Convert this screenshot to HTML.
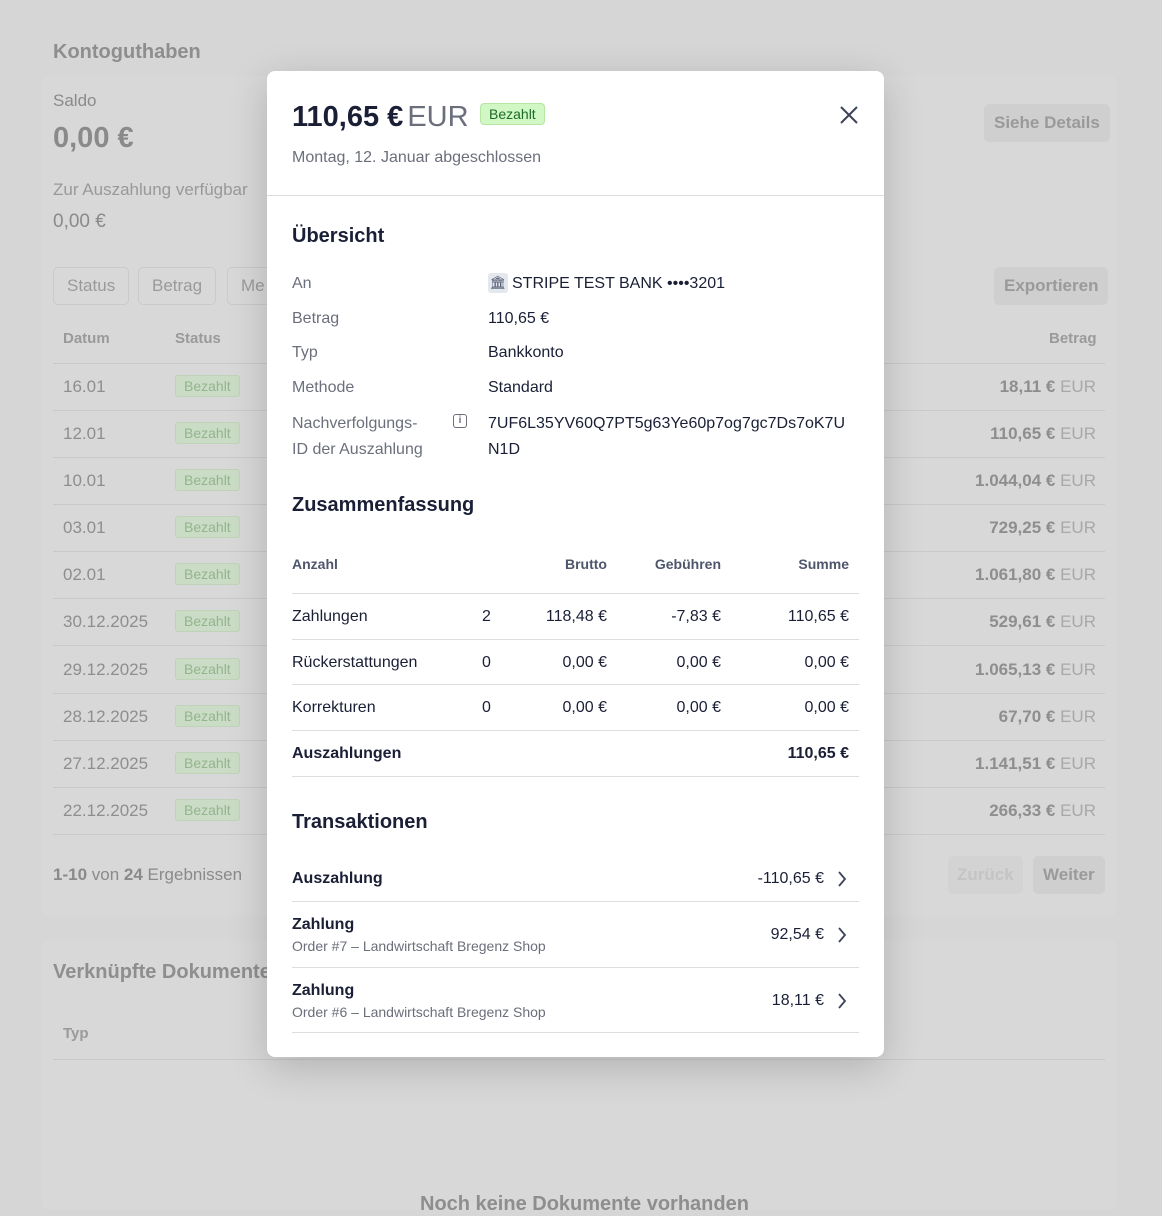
<!DOCTYPE html><html><head><meta charset="utf-8"><style>
*{margin:0;padding:0;box-sizing:border-box}
body{width:1162px;height:1200px;background:#d6d6d6;font-family:"Liberation Sans",sans-serif;position:relative;overflow:hidden;color:#8a8a8a}
.a{position:absolute;white-space:nowrap}
.card{position:absolute;background:#d8d8d8;border-radius:8px}
.btn{position:absolute;border:1px solid #cacaca;border-radius:5px;font-size:17px;color:#9a9a9a;height:38px;line-height:36px;padding:0 13px}
.gbtn{position:absolute;background:#cfcfcf;border-radius:5px;font-size:17px;font-weight:bold;color:#9a9a9a;height:38px;line-height:38px;padding:0 10px}
.bd{position:absolute;left:175px;background:#cbdcc6;border:1px solid #bfd3b9;color:#93b48d;font-size:14px;border-radius:3px;padding:2px 8px}
.hl{position:absolute;left:53px;width:1052px;height:1px;background:#c9c9c9}
.m{position:absolute;left:267px;top:71px;width:617px;height:986px;background:#fff;border-radius:8px;box-shadow:0 10px 40px rgba(0,0,0,.18);color:#1a1f36}
.m .a{font-size:16px}
.lbl{color:#6b6f7b}
.ml{position:absolute;left:25px;width:567px;height:1px;background:#dcdde0}
.chev{position:absolute;left:570px;width:10px;height:16px}
</style></head><body>
<div class="card" style="left:42px;top:76px;width:1075px;height:840px"></div>
<div class="card" style="left:42px;top:940px;width:1075px;height:270px"></div>
<div class="a" style="left:53px;top:41px;font-size:20px;font-weight:bold;color:#8e8e8e">Kontoguthaben</div>
<div class="a" style="left:53px;top:91px;font-size:17px">Saldo</div>
<div class="a" style="left:53px;top:122px;font-size:29px;font-weight:bold;color:#8a8a8a">0,00 €</div>
<div class="a" style="left:53px;top:180px;font-size:17px;color:#999">Zur Auszahlung verfügbar</div>
<div class="a" style="left:53px;top:211px;font-size:19px">0,00 €</div>
<div class="gbtn" style="left:984px;top:104px">Siehe Details</div>
<div class="btn" style="left:53px;top:267px">Status</div>
<div class="btn" style="left:138px;top:267px">Betrag</div>
<div class="btn" style="left:227px;top:267px">Me</div>
<div class="gbtn" style="left:994px;top:267px">Exportieren</div>
<div class="a" style="left:63px;top:330px;font-size:15px;font-weight:bold;color:#9a9a9a">Datum</div>
<div class="a" style="left:175px;top:330px;font-size:15px;font-weight:bold;color:#9a9a9a">Status</div>
<div class="a" style="left:1049px;top:330px;font-size:15px;font-weight:bold;color:#9a9a9a">Betrag</div>
<div class="hl" style="top:363px"></div>
<div id="rows"></div>
<div class="a" style="left:53px;top:865px;font-size:17px;color:#8a8a8a"><b>1-10</b> von <b>24</b> Ergebnissen</div>
<div class="a" style="left:948px;top:856px;height:38px;line-height:38px;padding:0 9px;font-size:17px;font-weight:bold;color:#c4c4c4;background:#d3d3d3;border-radius:5px">Zurück</div>
<div class="gbtn" style="left:1033px;top:856px">Weiter</div>
<div class="a" style="left:53px;top:961px;font-size:20px;font-weight:bold;color:#8e8e8e">Verknüpfte Dokumente</div>
<div class="a" style="left:63px;top:1025px;font-size:15px;font-weight:bold;color:#9a9a9a">Typ</div>
<div class="hl" style="top:1059px"></div>
<div class="a" style="left:420px;top:1193px;font-size:20px;font-weight:bold;color:#8e8e8e">Noch keine Dokumente vorhanden</div>
<script>
var d=["16.01","12.01","10.01","03.01","02.01","30.12.2025","29.12.2025","28.12.2025","27.12.2025","22.12.2025"],
v=["18,11","110,65","1.044,04","729,25","1.061,80","529,61","1.065,13","67,70","1.141,51","266,33"],
y=[387,434,481,528,575,622,670,717,764,811],h="";
for(var i=0;i<10;i++){var c=y[i];
h+='<div class="a" style="left:63px;top:'+(c-10)+'px;font-size:17px;color:#8e8e8e">'+d[i]+'</div>';
h+='<div class="bd" style="top:'+(c-12)+'px">Bezahlt</div>';
h+='<div class="a" style="right:66px;top:'+(c-10)+'px;font-size:17px;font-weight:bold;color:#8e8e8e">'+v[i]+' € <span style="font-weight:normal;color:#a8a8a8">EUR</span></div>';
h+='<div class="hl" style="top:'+(c+23)+'px"></div>';}
document.getElementById("rows").innerHTML=h;
</script>
<div class="m">
<div class="a" style="left:25px;top:30px;font-size:29px!important;font-weight:bold">110,65 € <span style="font-weight:normal;color:#6b6f7b;margin-left:-4px">EUR</span></div>
<div class="a" style="left:213px;top:32px;font-size:14px!important;background:#d1f7c4;border:1px solid #b5e6a2;color:#1c6b26;border-radius:4px;padding:2px 8px">Bezahlt</div>
<svg class="a" style="left:572px;top:34px" width="20" height="20" viewBox="0 0 20 20"><path d="M2 2L18 18M18 2L2 18" stroke="#3c4257" stroke-width="2"/></svg>
<div class="a lbl" style="left:25px;top:78px">Montag, 12. Januar abgeschlossen</div>
<div style="position:absolute;left:0;top:124px;width:617px;height:1px;background:#dcdde0"></div>
<div class="a" style="left:25px;top:154px;font-size:20px!important;font-weight:bold">Übersicht</div>
<div class="a lbl" style="left:25px;top:204px">An</div>
<div class="a" style="left:221px;top:202px;width:20px;height:20px;background:#e3e8ee;border-radius:3px;font-size:13px!important;text-align:center;line-height:20px;color:#4f566b">🏛</div>
<div class="a" style="left:245px;top:204px">STRIPE TEST BANK ••••3201</div>
<div class="a lbl" style="left:25px;top:239px">Betrag</div><div class="a" style="left:221px;top:239px">110,65 €</div>
<div class="a lbl" style="left:25px;top:273px">Typ</div><div class="a" style="left:221px;top:273px">Bankkonto</div>
<div class="a lbl" style="left:25px;top:308px">Methode</div><div class="a" style="left:221px;top:308px">Standard</div>
<div class="a lbl" style="left:25px;top:340px;line-height:26px">Nachverfolgungs-<br>ID der Auszahlung</div>
<div class="a" style="left:186px;top:343px;width:14px;height:14px;border:1.5px solid #6b6f7b;border-radius:3px;font-size:10px!important;line-height:11px;text-align:center;font-weight:bold;color:#6b6f7b">i</div>
<div class="a" style="left:221px;top:340px;line-height:26px">7UF6L35YV60Q7PT5g63Ye60p7og7gc7Ds7oK7U<br>N1D</div>
<div class="a" style="left:25px;top:423px;font-size:20px!important;font-weight:bold">Zusammenfassung</div>
<div class="a" style="left:25px;top:485px;font-size:14px!important;font-weight:bold;color:#4f566b">Anzahl</div>
<div class="a" style="right:277px;top:485px;font-size:14px!important;font-weight:bold;color:#4f566b">Brutto</div>
<div class="a" style="right:163px;top:485px;font-size:14px!important;font-weight:bold;color:#4f566b">Gebühren</div>
<div class="a" style="right:35px;top:485px;font-size:14px!important;font-weight:bold;color:#4f566b">Summe</div>
<div class="ml" style="top:522px"></div>
<div class="a" style="left:25px;top:537px">Zahlungen</div><div class="a" style="left:215px;top:537px">2</div><div class="a" style="right:277px;top:537px">118,48 €</div><div class="a" style="right:163px;top:537px">-7,83 €</div><div class="a" style="right:35px;top:537px">110,65 €</div>
<div class="ml" style="top:568px"></div>
<div class="a" style="left:25px;top:583px">Rückerstattungen</div><div class="a" style="left:215px;top:583px">0</div><div class="a" style="right:277px;top:583px">0,00 €</div><div class="a" style="right:163px;top:583px">0,00 €</div><div class="a" style="right:35px;top:583px">0,00 €</div>
<div class="ml" style="top:613px"></div>
<div class="a" style="left:25px;top:628px">Korrekturen</div><div class="a" style="left:215px;top:628px">0</div><div class="a" style="right:277px;top:628px">0,00 €</div><div class="a" style="right:163px;top:628px">0,00 €</div><div class="a" style="right:35px;top:628px">0,00 €</div>
<div class="ml" style="top:659px"></div>
<div class="a" style="left:25px;top:674px;font-weight:bold">Auszahlungen</div><div class="a" style="right:35px;top:674px;font-weight:bold">110,65 €</div>
<div class="ml" style="top:705px"></div>
<div class="a" style="left:25px;top:740px;font-size:20px!important;font-weight:bold">Transaktionen</div>
<div class="a" style="left:25px;top:799px;font-weight:bold">Auszahlung</div><div class="a" style="right:60px;top:799px">-110,65 €</div>
<svg class="chev" style="top:800px" viewBox="0 0 10 16"><path d="M2 1l6 7-6 7" fill="none" stroke="#3c4257" stroke-width="1.8"/></svg>
<div class="ml" style="top:830px"></div>
<div class="a" style="left:25px;top:845px;font-weight:bold">Zahlung</div>
<div class="a lbl" style="left:25px;top:867px;font-size:14px!important">Order #7 – Landwirtschaft Bregenz Shop</div>
<div class="a" style="right:60px;top:855px">92,54 €</div>
<svg class="chev" style="top:856px" viewBox="0 0 10 16"><path d="M2 1l6 7-6 7" fill="none" stroke="#3c4257" stroke-width="1.8"/></svg>
<div class="ml" style="top:896px"></div>
<div class="a" style="left:25px;top:911px;font-weight:bold">Zahlung</div>
<div class="a lbl" style="left:25px;top:933px;font-size:14px!important">Order #6 – Landwirtschaft Bregenz Shop</div>
<div class="a" style="right:60px;top:921px">18,11 €</div>
<svg class="chev" style="top:922px" viewBox="0 0 10 16"><path d="M2 1l6 7-6 7" fill="none" stroke="#3c4257" stroke-width="1.8"/></svg>
<div class="ml" style="top:961px"></div>
</div>
</body></html>
